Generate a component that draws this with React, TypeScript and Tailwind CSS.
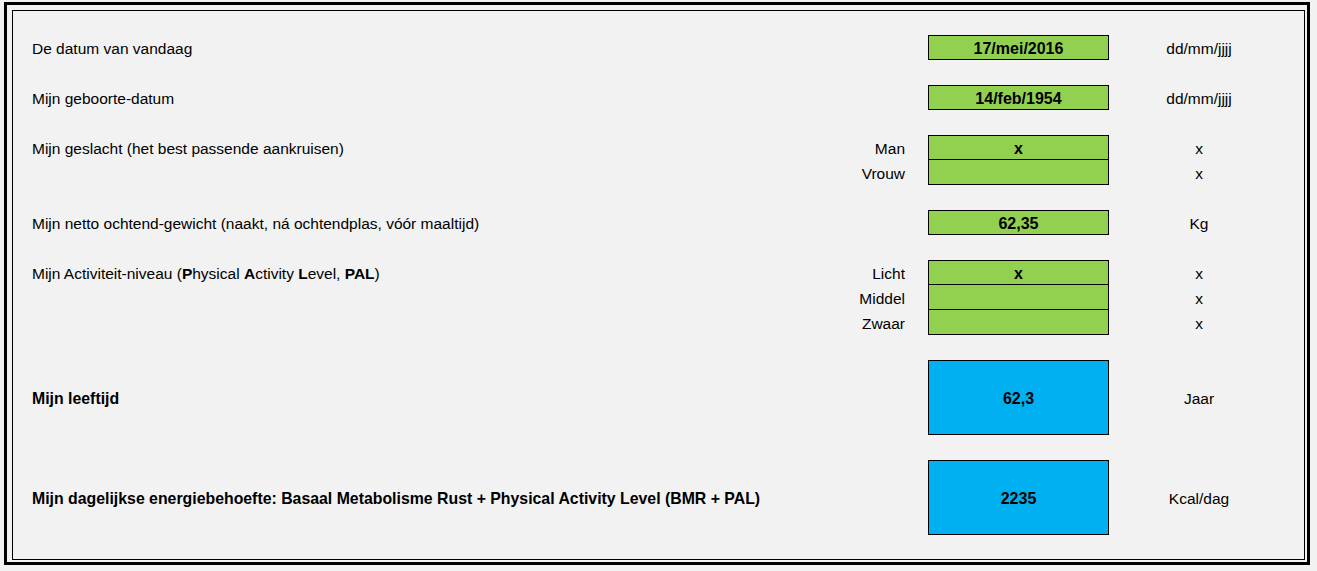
type BoxKind = "green" | "blue" | "none";

interface Row {
  label?: React.ReactNode;
  bold?: boolean;
  sub?: string;
  box: BoxKind;
  value?: string;
  unit?: string;
  tall?: boolean;
}

const BOX_BG: Record<BoxKind, string> = {
  green: "bg-[#92d050] border border-black",
  blue: "bg-[#00b0f0] border border-black",
  none: "",
};

// each section is a group of rows; sections are separated by one empty row
const SECTIONS: Row[][] = [
  [{ label: "De datum van vandaag", box: "green", value: "17/mei/2016", unit: "dd/mm/jjjj" }],
  [{ label: "Mijn geboorte-datum", box: "green", value: "14/feb/1954", unit: "dd/mm/jjjj" }],
  [
    { label: "Mijn geslacht (het best passende aankruisen)", sub: "Man", box: "green", value: "x", unit: "x" },
    { sub: "Vrouw", box: "green", unit: "x" },
  ],
  [
    {
      label: "Mijn netto ochtend-gewicht (naakt, ná ochtendplas, vóór maaltijd)",
      box: "green",
      value: "62,35",
      unit: "Kg",
    },
  ],
  [
    {
      label: (
        <>
          Mijn Activiteit-niveau (<b>P</b>hysical <b>A</b>ctivity <b>L</b>evel, <b>PAL</b>)
        </>
      ),
      sub: "Licht",
      box: "green",
      value: "x",
      unit: "x",
    },
    { sub: "Middel", box: "green", unit: "x" },
    { sub: "Zwaar", box: "green", unit: "x" },
  ],
  [{ label: "Mijn leeftijd", bold: true, box: "blue", value: "62,3", unit: "Jaar", tall: true }],
  [
    {
      label: "Mijn dagelijkse energiebehoefte: Basaal Metabolisme Rust + Physical Activity Level (BMR + PAL)",
      bold: true,
      box: "blue",
      value: "2235",
      unit: "Kcal/dag",
      tall: true,
    },
  ],
];

function FormRow({ row, stacked }: { row: Row; stacked: boolean }) {
  return (
    <div className={`flex items-center ${row.tall ? "h-[75px]" : "h-[25px]"}`}>
      <div
        className={`flex-1 pl-[19px] pt-[3px] whitespace-nowrap ${row.bold ? "font-bold text-[15.85px]" : ""}`}
      >
        {row.label}
      </div>
      <div className="w-[120px] pt-[3px] text-right">{row.sub}</div>
      <div className="w-[23px]" />
      <div
        className={`w-[181px] h-full flex items-center justify-center pt-[3px] font-bold text-[16px] ${
          BOX_BG[row.box]
        } ${stacked ? "border-t-0" : ""}`}
      >
        {row.value}
      </div>
      <div className="w-[180px] pt-[3px] text-center">{row.unit}</div>
      <div className="w-[15px]" />
    </div>
  );
}

export default function App() {
  return (
    <div className="w-[1317px] h-[571px] bg-[#f2f2f2] text-black text-[15.5px] font-['Liberation_Sans',Arial,sans-serif] pl-[4px] pt-[2px]">
      <div className="w-[1306px] h-[563px] border-[3px] border-black pl-[5px] pt-[5px]">
        <div className="w-[1293px] h-[550px] border border-black pt-[24px] flex flex-col">
          {SECTIONS.map((section, si) => (
            <div key={si} className={si > 0 ? "mt-[25px]" : ""}>
              {section.map((row, ri) => (
                <FormRow key={ri} row={row} stacked={ri > 0} />
              ))}
            </div>
          ))}
        </div>
      </div>
    </div>
  );
}
